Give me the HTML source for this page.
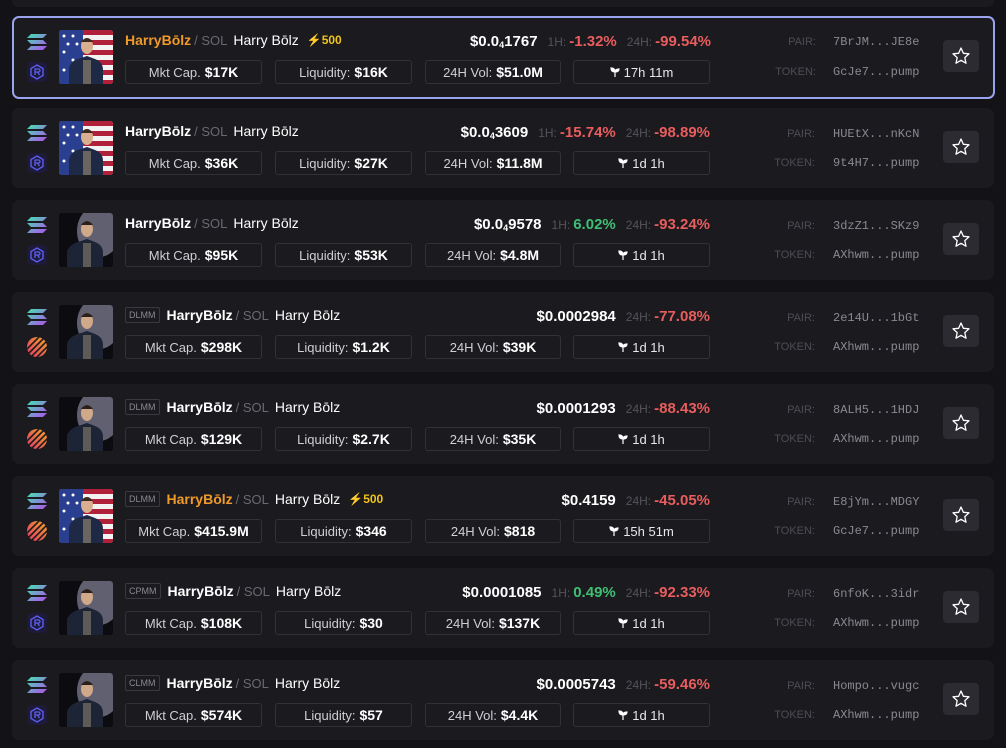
<!DOCTYPE html><html><head><meta charset="utf-8"><style>
*{box-sizing:border-box;margin:0;padding:0}
body{width:1006px;height:748px;background:#131217;font-family:"Liberation Sans",sans-serif;position:relative;overflow:hidden;color:#fff}
.top{position:absolute;left:12px;top:-10px;width:982px;height:17px;background:#1b1a1f;border-radius:6px}
.card{position:absolute;left:12px;width:982px;height:80px;background:#1b1a1f;border-radius:7px}
.sel{border:2px solid #9aa3ee}
.sol{position:absolute;left:15px;top:17px;width:20px;height:16px}
.ic2{position:absolute;left:15px;top:45px;width:20px;height:20px}
.img{position:absolute;left:47px;top:13px;width:54px;height:54px;border-radius:3px;overflow:hidden}
.name{position:absolute;left:113px;top:15px;font-size:14px;display:flex;align-items:center;white-space:nowrap}
.badge{border:1px solid #3a3940;color:#8a8990;font-size:9px;padding:2px 3px;border-radius:2px;margin-right:7px}
.n1{font-weight:bold}
.sl{color:#6a6970;font-size:13px;margin:0 6px 0 3px}
.bolt{color:#f0c419;font-weight:bold;font-size:12px;margin-left:8px}
.box{position:absolute;top:43px;height:24px;border:1px solid #323138;border-radius:3px;font-size:13px;color:#cfcfd4;display:flex;align-items:center;justify-content:center}
.box b{color:#fff;margin-left:4px;font-size:14px}
.b1{left:113px;width:137px}.b2{left:263px;width:137px}.b3{left:413px;width:136px}.b4{left:561px;width:137px;font-size:13px;color:#e8e8ec}
.b4 svg{margin-right:4px}
.price{position:absolute;right:284px;top:16px;font-size:15px;white-space:nowrap;display:flex;align-items:baseline}
.price .p{font-weight:bold}
.lb{color:#55545a;font-size:12px;margin:0 3px 0 10px}
.r{color:#e85d5d;font-weight:bold}.g{color:#3fbf73;font-weight:bold}
.pl{position:absolute;right:179px;font-size:11px;color:#4e4d54}
.pv{position:absolute;left:821px;font-family:"Liberation Mono",monospace;font-size:12px;color:#8a8990}
.star{position:absolute;left:931px;top:23px;width:36px;height:32px;background:#2c2b31;border-radius:4px;display:flex;align-items:center;justify-content:center}
sub{font-size:9px;vertical-align:-2px}
</style></head><body>
<div class="top"></div>
<svg width="0" height="0" style="position:absolute"><defs>
<linearGradient id="sg" x1="0" y1="0" x2="1" y2="1"><stop offset="0" stop-color="#3ee6b0"/><stop offset="1" stop-color="#b44cf0"/></linearGradient>
<linearGradient id="mg" x1="0" y1="1" x2="1" y2="0"><stop offset="0" stop-color="#e0366a"/><stop offset="1" stop-color="#f5a623"/></linearGradient>
<symbol id="sol" viewBox="0 0 20 16"><path d="M4 0H20L16 4H0Z M0 6H16L20 10H4Z M4 12H20L16 16H0Z" fill="url(#sg)"/></symbol>
<symbol id="ray" viewBox="0 0 20 20"><rect width="20" height="20" rx="4" fill="#1e1a3a"/><path d="M10 3L16 6.5V13.5L10 17L4 13.5V6.5Z" fill="none" stroke="#5b5ff0" stroke-width="1.4"/><path d="M8 13V7H11.5A1.5 1.5 0 0 1 11.5 10H8M10.5 10L12.5 13" fill="none" stroke="#5b5ff0" stroke-width="1.3"/></symbol>
<symbol id="met" viewBox="0 0 20 20"><circle cx="10" cy="10" r="10" fill="url(#mg)"/><path d="M-2 14L14 -2M0 18L18 0M3 21L21 3M7 23L23 7" stroke="#1b1a1f" stroke-width="1.6"/></symbol>
<symbol id="flag" viewBox="0 0 54 54"><rect width="54" height="54" fill="#f2f2f2"/><g fill="#b0203a"><rect y="0" width="54" height="5"/><rect y="10" width="54" height="5"/><rect y="20" width="54" height="5"/><rect y="30" width="54" height="5"/><rect y="40" width="54" height="5"/><rect y="50" width="54" height="4"/></g><rect width="24" height="54" fill="#2a3f8f"/><g fill="#fff"><circle cx="5" cy="6" r="1.5"/><circle cx="14" cy="6" r="1.5"/><circle cx="9" cy="14" r="1.5"/><circle cx="18" cy="14" r="1.5"/><circle cx="5" cy="22" r="1.5"/><circle cx="14" cy="30" r="1.5"/><circle cx="5" cy="40" r="1.5"/><circle cx="12" cy="48" r="1.5"/></g><path d="M10 54V38Q12 30 22 28L28 26L36 29Q44 32 44 40V54Z" fill="#1e2a45"/><rect x="24" y="30" width="8" height="24" fill="#6a6560"/><ellipse cx="28" cy="16" rx="6" ry="8" fill="#d8b090"/><path d="M22 12Q28 4 34 12" fill="#3a2a20"/></symbol>
<symbol id="dark" viewBox="0 0 54 54"><rect width="54" height="54" fill="#0c0c10"/><ellipse cx="40" cy="18" rx="22" ry="26" fill="#9a9ab0" opacity=".6"/><path d="M8 54V38Q12 30 22 28L28 26L36 29Q44 32 44 40V54Z" fill="#1c2436"/><rect x="24" y="30" width="8" height="24" fill="#5e5a58"/><ellipse cx="28" cy="16" rx="6" ry="8" fill="#d0a88a"/><path d="M22 12Q28 4 34 12" fill="#2a201a"/></symbol>
<symbol id="st" viewBox="0 0 20 20"><path d="M10 2L12.4 7.3 18 7.8 13.8 11.6 15 17.2 10 14.3 5 17.2 6.2 11.6 2 7.8 7.6 7.3Z" fill="none" stroke="#fff" stroke-width="1.3" stroke-linejoin="round"/></symbol>
<symbol id="sp" viewBox="0 0 10 10"><path d="M5 10V5M5 5Q5 1 1 1Q1 5 5 5M5 5Q5 2 9 2Q9 5 5 5" fill="#fff" stroke="#fff" stroke-width="1.2"/></symbol>
</defs></svg>

<div class="card sel" style="top:16px;left:12px;width:983px;height:83px"><div style="position:absolute;left:-2px;top:-2px;width:983px;height:83px">
<svg class="sol" style="top:18px"><use href="#sol"/></svg><svg class="ic2" style="top:46px"><use href="#ray"/></svg>
<svg class="img" style="top:14px"><use href="#flag"/></svg>
<div class="name" style="top:16px"><span class="n1" style="color:#f09a2a">HarryBōlz</span><span class="sl">/ SOL</span>Harry Bōlz<span class="bolt">⚡500</span></div>
<div class="box b1" style="top:44px">Mkt Cap.<b>$17K</b></div><div class="box b2" style="top:44px">Liquidity:<b>$16K</b></div><div class="box b3" style="top:44px">24H Vol:<b>$51.0M</b></div><div class="box b4" style="top:44px"><svg width="10" height="10"><use href="#sp"/></svg>17h 11m</div>
<div class="price" style="top:17px"><span class="p">$0.0<sub>4</sub>1767</span><span class="lb">1H:</span><span class="r">-1.32%</span><span class="lb">24H:</span><span class="r">-99.54%</span></div>
<div class="pl" style="top:20px">PAIR:</div><div class="pv" style="top:19px">7BrJM...JE8e</div>
<div class="pl" style="top:50px">TOKEN:</div><div class="pv" style="top:49px">GcJe7...pump</div>
<div class="star" style="top:24px"><svg width="20" height="20"><use href="#st"/></svg></div></div></div>

<div class="card" style="top:108px">
<svg class="sol"><use href="#sol"/></svg><svg class="ic2"><use href="#ray"/></svg><svg class="img"><use href="#flag"/></svg>
<div class="name"><span class="n1">HarryBōlz</span><span class="sl">/ SOL</span>Harry Bōlz</div>
<div class="box b1">Mkt Cap.<b>$36K</b></div><div class="box b2">Liquidity:<b>$27K</b></div><div class="box b3">24H Vol:<b>$11.8M</b></div><div class="box b4"><svg width="10" height="10"><use href="#sp"/></svg>1d 1h</div>
<div class="price"><span class="p">$0.0<sub>4</sub>3609</span><span class="lb">1H:</span><span class="r">-15.74%</span><span class="lb">24H:</span><span class="r">-98.89%</span></div>
<div class="pl" style="top:20px">PAIR:</div><div class="pv" style="top:19px">HUEtX...nKcN</div><div class="pl" style="top:49px">TOKEN:</div><div class="pv" style="top:48px">9t4H7...pump</div>
<div class="star"><svg width="20" height="20"><use href="#st"/></svg></div></div>

<div class="card" style="top:200px">
<svg class="sol"><use href="#sol"/></svg><svg class="ic2"><use href="#ray"/></svg><svg class="img"><use href="#dark"/></svg>
<div class="name"><span class="n1">HarryBōlz</span><span class="sl">/ SOL</span>Harry Bōlz</div>
<div class="box b1">Mkt Cap.<b>$95K</b></div><div class="box b2">Liquidity:<b>$53K</b></div><div class="box b3">24H Vol:<b>$4.8M</b></div><div class="box b4"><svg width="10" height="10"><use href="#sp"/></svg>1d 1h</div>
<div class="price"><span class="p">$0.0<sub>4</sub>9578</span><span class="lb">1H:</span><span class="g">6.02%</span><span class="lb">24H:</span><span class="r">-93.24%</span></div>
<div class="pl" style="top:20px">PAIR:</div><div class="pv" style="top:19px">3dzZ1...SKz9</div><div class="pl" style="top:49px">TOKEN:</div><div class="pv" style="top:48px">AXhwm...pump</div>
<div class="star"><svg width="20" height="20"><use href="#st"/></svg></div></div>

<div class="card" style="top:292px">
<svg class="sol"><use href="#sol"/></svg><svg class="ic2"><use href="#met"/></svg><svg class="img"><use href="#dark"/></svg>
<div class="name"><span class="badge">DLMM</span><span class="n1">HarryBōlz</span><span class="sl">/ SOL</span>Harry Bōlz</div>
<div class="box b1">Mkt Cap.<b>$298K</b></div><div class="box b2">Liquidity:<b>$1.2K</b></div><div class="box b3">24H Vol:<b>$39K</b></div><div class="box b4"><svg width="10" height="10"><use href="#sp"/></svg>1d 1h</div>
<div class="price"><span class="p">$0.0002984</span><span class="lb">24H:</span><span class="r">-77.08%</span></div>
<div class="pl" style="top:20px">PAIR:</div><div class="pv" style="top:19px">2e14U...1bGt</div><div class="pl" style="top:49px">TOKEN:</div><div class="pv" style="top:48px">AXhwm...pump</div>
<div class="star"><svg width="20" height="20"><use href="#st"/></svg></div></div>

<div class="card" style="top:384px">
<svg class="sol"><use href="#sol"/></svg><svg class="ic2"><use href="#met"/></svg><svg class="img"><use href="#dark"/></svg>
<div class="name"><span class="badge">DLMM</span><span class="n1">HarryBōlz</span><span class="sl">/ SOL</span>Harry Bōlz</div>
<div class="box b1">Mkt Cap.<b>$129K</b></div><div class="box b2">Liquidity:<b>$2.7K</b></div><div class="box b3">24H Vol:<b>$35K</b></div><div class="box b4"><svg width="10" height="10"><use href="#sp"/></svg>1d 1h</div>
<div class="price"><span class="p">$0.0001293</span><span class="lb">24H:</span><span class="r">-88.43%</span></div>
<div class="pl" style="top:20px">PAIR:</div><div class="pv" style="top:19px">8ALH5...1HDJ</div><div class="pl" style="top:49px">TOKEN:</div><div class="pv" style="top:48px">AXhwm...pump</div>
<div class="star"><svg width="20" height="20"><use href="#st"/></svg></div></div>

<div class="card" style="top:476px">
<svg class="sol"><use href="#sol"/></svg><svg class="ic2"><use href="#met"/></svg><svg class="img"><use href="#flag"/></svg>
<div class="name"><span class="badge">DLMM</span><span class="n1" style="color:#f09a2a">HarryBōlz</span><span class="sl">/ SOL</span>Harry Bōlz<span class="bolt">⚡500</span></div>
<div class="box b1">Mkt Cap.<b>$415.9M</b></div><div class="box b2">Liquidity:<b>$346</b></div><div class="box b3">24H Vol:<b>$818</b></div><div class="box b4"><svg width="10" height="10"><use href="#sp"/></svg>15h 51m</div>
<div class="price"><span class="p">$0.4159</span><span class="lb">24H:</span><span class="r">-45.05%</span></div>
<div class="pl" style="top:20px">PAIR:</div><div class="pv" style="top:19px">E8jYm...MDGY</div><div class="pl" style="top:49px">TOKEN:</div><div class="pv" style="top:48px">GcJe7...pump</div>
<div class="star"><svg width="20" height="20"><use href="#st"/></svg></div></div>

<div class="card" style="top:568px">
<svg class="sol"><use href="#sol"/></svg><svg class="ic2"><use href="#ray"/></svg><svg class="img"><use href="#dark"/></svg>
<div class="name"><span class="badge">CPMM</span><span class="n1">HarryBōlz</span><span class="sl">/ SOL</span>Harry Bōlz</div>
<div class="box b1">Mkt Cap.<b>$108K</b></div><div class="box b2">Liquidity:<b>$30</b></div><div class="box b3">24H Vol:<b>$137K</b></div><div class="box b4"><svg width="10" height="10"><use href="#sp"/></svg>1d 1h</div>
<div class="price"><span class="p">$0.0001085</span><span class="lb">1H:</span><span class="g">0.49%</span><span class="lb">24H:</span><span class="r">-92.33%</span></div>
<div class="pl" style="top:20px">PAIR:</div><div class="pv" style="top:19px">6nfoK...3idr</div><div class="pl" style="top:49px">TOKEN:</div><div class="pv" style="top:48px">AXhwm...pump</div>
<div class="star"><svg width="20" height="20"><use href="#st"/></svg></div></div>

<div class="card" style="top:660px">
<svg class="sol"><use href="#sol"/></svg><svg class="ic2"><use href="#ray"/></svg><svg class="img"><use href="#dark"/></svg>
<div class="name"><span class="badge">CLMM</span><span class="n1">HarryBōlz</span><span class="sl">/ SOL</span>Harry Bōlz</div>
<div class="box b1">Mkt Cap.<b>$574K</b></div><div class="box b2">Liquidity:<b>$57</b></div><div class="box b3">24H Vol:<b>$4.4K</b></div><div class="box b4"><svg width="10" height="10"><use href="#sp"/></svg>1d 1h</div>
<div class="price"><span class="p">$0.0005743</span><span class="lb">24H:</span><span class="r">-59.46%</span></div>
<div class="pl" style="top:20px">PAIR:</div><div class="pv" style="top:19px">Hompo...vugc</div><div class="pl" style="top:49px">TOKEN:</div><div class="pv" style="top:48px">AXhwm...pump</div>
<div class="star"><svg width="20" height="20"><use href="#st"/></svg></div></div>
</body></html>
